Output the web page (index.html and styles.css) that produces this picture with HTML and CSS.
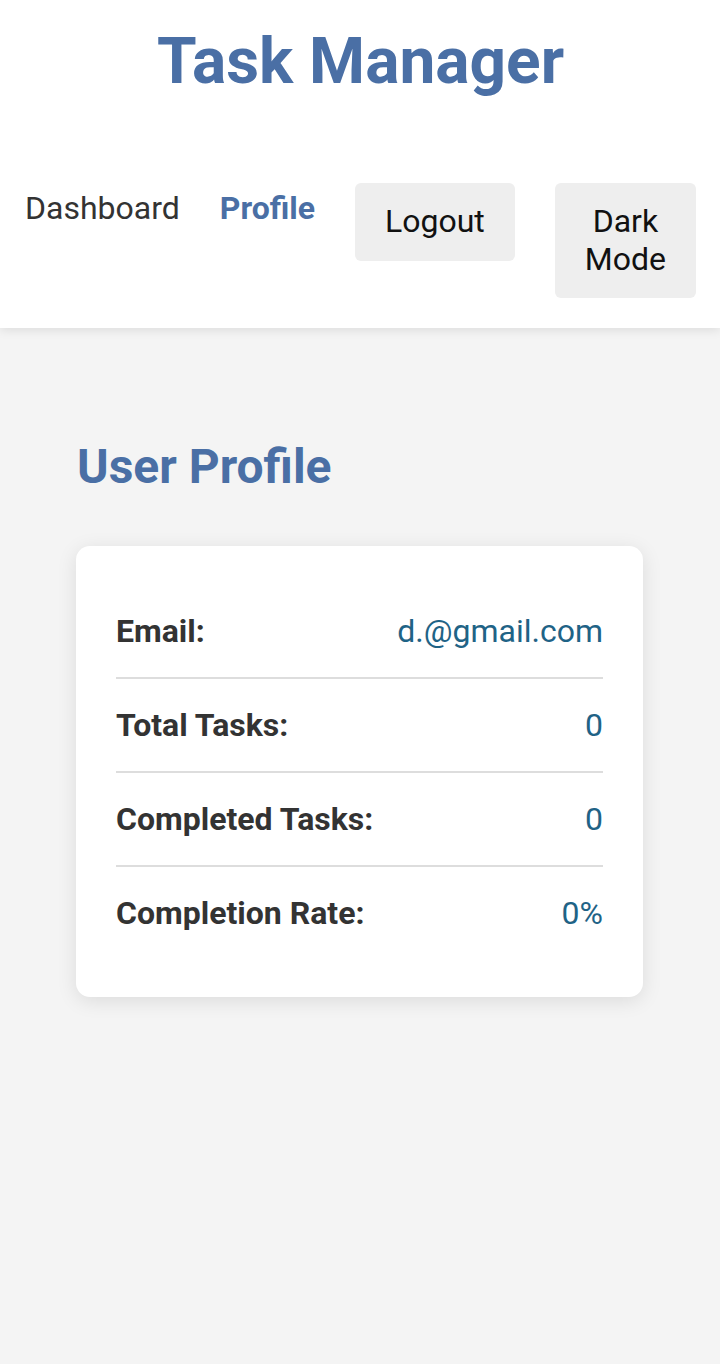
FILE: index.html
```html
<!DOCTYPE html>
<html lang="en">
<head>
<meta charset="utf-8">
<title>Task Manager</title>
<link rel="stylesheet" href="styles.css">
</head>
<body>
<header class="header">
  <h1 class="brand">Task Manager</h1>
  <nav class="nav">
    <a class="nav-link" href="#">Dashboard</a>
    <a class="nav-link active" href="#">Profile</a>
    <button class="nav-btn" type="button">Logout</button>
    <button class="nav-btn" type="button">Dark Mode</button>
  </nav>
</header>
<main class="main">
  <h2 class="page-title">User Profile</h2>
  <section class="card">
    <div class="row"><span class="label">Email:</span><span class="value">d.@gmail.com</span></div>
    <div class="row"><span class="label">Total Tasks:</span><span class="value">0</span></div>
    <div class="row"><span class="label">Completed Tasks:</span><span class="value">0</span></div>
    <div class="row"><span class="label">Completion Rate:</span><span class="value">0%</span></div>
  </section>
</main>
</body>
</html>
```
FILE: styles.css
```css
* { box-sizing: border-box; }
html, body {
  margin: 0;
  padding: 0;
}
body {
  font-family: Roboto, "Liberation Sans", sans-serif;
  background: #f4f4f4;
  color: #333;
  min-height: 1364px;
}
.header {
  background: #fff;
  box-shadow: 0 2px 10px rgba(0,0,0,0.1);
  padding: 24px 24px 30px 25px;
}
.brand {
  margin: 0;
  text-align: center;
  color: #4a6fa5;
  font-size: 64px;
  font-weight: 700;
  line-height: 75px;
}
.nav {
  margin-top: 84px;
  display: flex;
  align-items: flex-start;
  gap: 40px;
}
.nav-link {
  font-size: 32px;
  line-height: 37.5px;
  padding-top: 7px;
  color: #333;
  text-decoration: none;
  white-space: nowrap;
}
.nav-link.active {
  color: #4a6fa5;
  font-weight: 700;
}
.nav-btn {
  font-family: inherit;
  font-size: 32px;
  line-height: 37.5px;
  padding: 20px 30px;
  background: #eee;
  color: #111;
  border: none;
  border-radius: 6px;
  text-align: center;
}
.main {
  padding: 0 77px 0 76px;
}
.page-title {
  margin: 111px 0 51px 1px;
  color: #4a6fa5;
  font-size: 48px;
  font-weight: 700;
  line-height: 56px;
}
.card {
  background: #fff;
  border-radius: 14px;
  box-shadow: 0 4px 20px rgba(0,0,0,0.1);
  padding: 39px 40px 38px;
}
.row {
  display: flex;
  justify-content: space-between;
  align-items: center;
  padding: 27px 0;
  font-size: 32px;
  line-height: 38px;
  border-bottom: 2px solid #ddd;
}
.row:last-child { border-bottom: none; }
.label {
  font-weight: 700;
  color: #333;
}
.value {
  color: #1f6386;
}
```
